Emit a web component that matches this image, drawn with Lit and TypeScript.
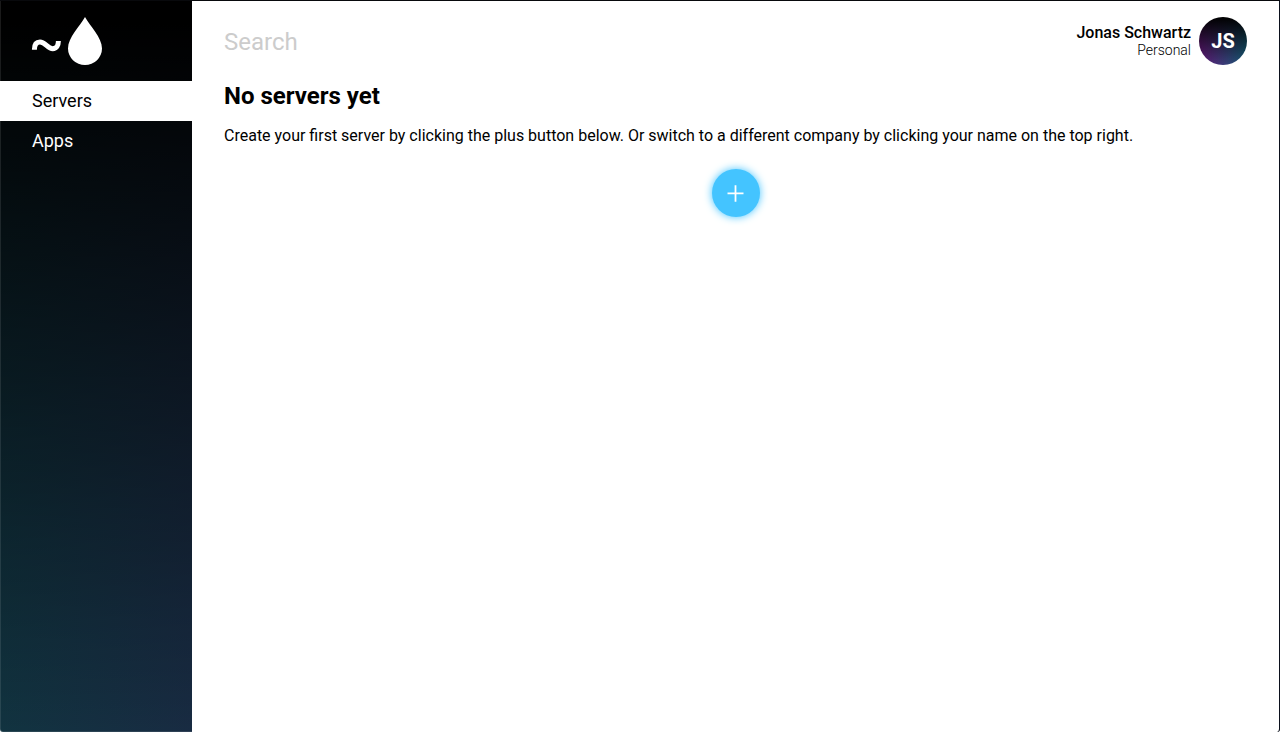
import { LitElement, html, css } from "lit";
import { customElement, state } from "lit/decorators.js";

@customElement("app-sidebar")
class AppSidebar extends LitElement {
  @state() selected = "Servers";

  static styles = css`
    :host {
      display: flex;
      flex-direction: column;
      box-sizing: border-box;
      color: #fff;
      background: linear-gradient(to bottom, #000 0, #000 3%, transparent 100%),
        linear-gradient(to right, #113340, #182b42);
      box-shadow: inset 1px 0 rgba(255, 255, 255, 0.1), inset 0 -1px rgba(255, 255, 255, 0.1);
      border-bottom-left-radius: 3px;
    }
    .logo {
      display: block;
      height: 80px;
      width: 192px;
    }
    .item {
      height: 40px;
      line-height: 40px;
      padding-left: 32px;
      font-size: 18px;
      cursor: pointer;
    }
    .active {
      background: #fff;
      color: #000;
    }
  `;

  render() {
    return html`
      <svg class="logo" viewBox="0 0 192 80">
        <path d="M34.4 48.8C34.4 43.7 36.6 41.1 40 41.1C45.3 41.1 47.6 47.7 52.8 47.7C56.4 47.7 58.4 44.7 58.4 40" fill="none" stroke="#fff" stroke-width="5" />
        <path d="M85 16C90 25 102 36.500 102 47.500A17 16.500 0 0 1 68 47.500C68 36.500 80 25 85 16Z" fill="#fff" />
      </svg>
      ${["Servers", "Apps"].map(
        (name) => html`<div class="item ${name === this.selected ? "active" : ""}" @click=${() => (this.selected = name)}>${name}</div>`
      )}
    `;
  }
}

@customElement("app-root")
class AppRoot extends LitElement {
  static styles = css`
    :host {
      display: grid;
      grid-template-columns: 192px 1fr;
      box-sizing: border-box;
      width: 100vw;
      height: 100vh;
      border-top: 1px solid #08090c;
      border-right: 1px solid #0b101c;
      background: linear-gradient(#fff, #fff) padding-box, #080d17;
      border-bottom-right-radius: 3px;
      overflow: hidden;
      font-family: Roboto, sans-serif;
      color: #000;
    }
    main {
      padding: 16px 32px;
    }
    header {
      display: flex;
      align-items: center;
      height: 48px;
    }
    .search {
      flex: 1;
      min-width: 0;
      border: 0;
      outline: 0;
      padding: 2px 0 0;
      background: none;
      font: 400 24px/28px Roboto, sans-serif;
    }
    .search::placeholder {
      color: #ccc;
      opacity: 1;
    }
    .user {
      text-align: right;
      margin-right: 8px;
      padding-bottom: 2px;
    }
    .name {
      font-size: 16px;
      line-height: 19px;
      font-weight: 500;
    }
    .company {
      font-size: 14px;
      line-height: 16px;
      font-weight: 300;
    }
    .avatar {
      width: 48px;
      height: 48px;
      border-radius: 50%;
      background: linear-gradient(to bottom, #000, transparent), linear-gradient(to right, #64187a, #155e78);
      color: #fff;
      font-size: 20px;
      font-weight: 700;
      line-height: 48px;
      text-align: center;
    }
    h1 {
      margin: 16px 0 0;
      font-size: 24px;
      line-height: 30px;
      font-weight: 700;
    }
    p {
      margin: 15px 0 0;
      font-size: 16px;
      line-height: 20px;
    }
    .add {
      display: flex;
      align-items: center;
      justify-content: center;
      width: 48px;
      height: 48px;
      margin: 23px auto 0;
      padding: 0;
      border: 0;
      border-radius: 50%;
      background: #44c4ff;
      box-shadow: 0 0 8px #44c4ff;
      cursor: pointer;
    }
  `;

  render() {
    return html`
      <app-sidebar></app-sidebar>
      <main>
        <header>
          <input class="search" placeholder="Search" />
          <div class="user">
            <div class="name">Jonas Schwartz</div>
            <div class="company">Personal</div>
          </div>
          <div class="avatar">JS</div>
        </header>
        <h1>No servers yet</h1>
        <p>Create your first server by clicking the plus button below. Or switch to a different company by clicking your name on the top right.</p>
        <button class="add" aria-label="Add server">
          <svg width="48" height="48" viewBox="0 0 48 48">
            <path d="M15.500 24.300H31.500M23.500 16.300V32.800" stroke="#fff" stroke-width="1.800" />
          </svg>
        </button>
      </main>
    `;
  }
}
